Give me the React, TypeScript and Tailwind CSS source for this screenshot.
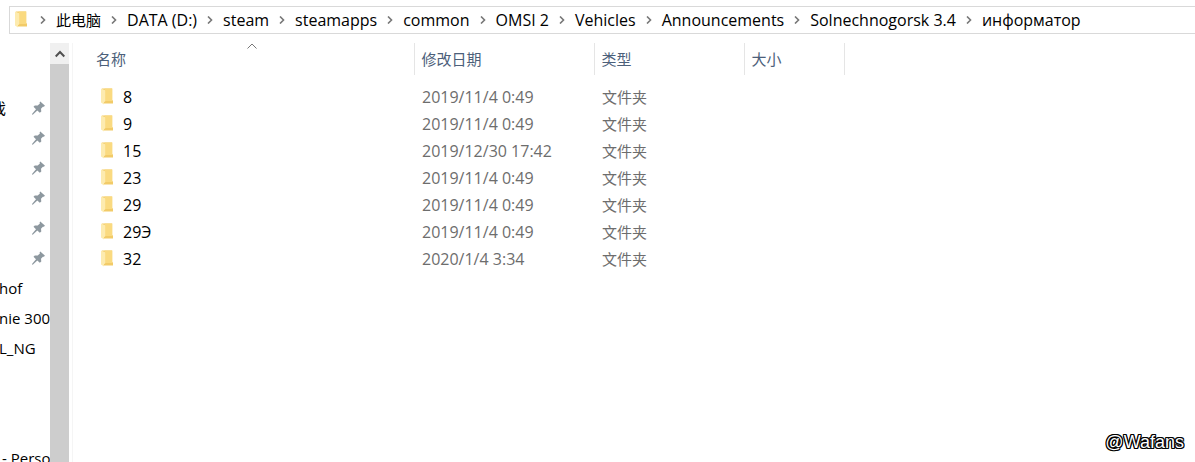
const crumbs = [
  'DATA (D:)',
  'steam',
  'steamapps',
  'common',
  'OMSI 2',
  'Vehicles',
  'Announcements',
  'Solnechnogorsk 3.4',
  'информатор',
]

const rows = [
  { name: '8', date: '2019/11/4 0:49' },
  { name: '9', date: '2019/11/4 0:49' },
  { name: '15', date: '2019/12/30 17:42' },
  { name: '23', date: '2019/11/4 0:49' },
  { name: '29', date: '2019/11/4 0:49' },
  { name: '29Э', date: '2019/11/4 0:49' },
  { name: '32', date: '2020/1/4 3:34' },
]

const pinned = ['戏', '', '', '', '', '']
const recent = ['hof', 'nie 300', 'L_NG']

function FolderIcon() {
  return (
    <svg className="h-[17px] w-3 shrink-0" viewBox="0 0 12 17" aria-hidden="true">
      <path d="M1 0.5h10.200v11.500l.8.8v2.700H2z" fill="#f2cb68" />
      <path d="M3.500 0.500h7.700v12.500H4z" fill="#fada80" />
      <path d="M0 0.500l3.600 1.500q.6.3.6.9v10.600l-1.200.6v2.400L0 14.500z" fill="#fdebaf" />
    </svg>
  )
}

function PinIcon() {
  return (
    <svg className="h-[14px] w-[13px] shrink-0" viewBox="0 0 13 14" aria-hidden="true">
      <path
        d="M8.300 0.500L13 4.800l-1.200 1-.9-.1-1.900 2.100.3 2.600-1.500 1.400L5.300 9.400 1 13.500l-1 .3.200-1.100L4 8.200 1.500 5.700l1.300-1.300 2.900.2 2.200-2.100-.3-1z"
        fill="#8d989f"
      />
    </svg>
  )
}

function Chevron() {
  return (
    <svg className="mx-[10px] h-2 w-[6px] shrink-0" viewBox="0 0 6 8" fill="none" aria-hidden="true">
      <path d="M1 0.500L4.500 4L1 7.500" stroke="#777" strokeWidth="1.600" />
    </svg>
  )
}

export default function App() {
  return (
    <div className="relative h-screen overflow-hidden bg-white pt-[6px] font-['Open_Sans','Noto_Sans_CJK_SC',sans-serif] text-base leading-5 text-black">
      {/* Address bar */}
      <nav
        aria-label="Path"
        className="ml-[9px] flex h-7 items-center border border-r-0 border-[#d9d9d9] pb-px pl-[5px]"
      >
        <FolderIcon />
        <ol className="flex items-center whitespace-nowrap">
          <li className="ml-[3px] flex items-center text-[15px]">
            <Chevron />
            <a href="#">此电脑</a>
          </li>
          {crumbs.map((crumb) => (
            <li key={crumb} className="flex items-center">
              <Chevron />
              <a href="#">{crumb}</a>
            </li>
          ))}
        </ol>
      </nav>

      <div className="mt-[9px] flex h-full">
        {/* Quick access */}
        <aside className="w-[50px] shrink-0 overflow-hidden pt-[50px]">
          <ul className="whitespace-nowrap">
            {pinned.map((label, i) => (
              <li key={i} className="flex h-[30px] items-center justify-between pr-[5px]">
                <span className="-ml-[9px] text-[15px]">{label}</span>
                <PinIcon />
              </li>
            ))}
            {recent.map((label) => (
              <li key={label} className="-ml-px flex h-[30px] items-center text-[15px]">
                {label}
              </li>
            ))}
            <li className="mt-20 flex h-[30px] items-center pl-[2px] text-[15px]">- Personal</li>
          </ul>
        </aside>

        {/* Scroll bar */}
        <div className="w-[19px] shrink-0 bg-[#cdcdcd]">
          <button
            type="button"
            aria-label="Scroll up"
            className="flex h-[21px] w-full items-center justify-center bg-[#f0f0f0]"
          >
            <svg className="h-2 w-[10px]" viewBox="0 0 10 8" fill="none" aria-hidden="true">
              <path d="M0.700 6.500L5 2l4.300 4.500" stroke="#505050" strokeWidth="2" />
            </svg>
          </button>
        </div>

        {/* File list */}
        <main className="relative ml-[3px] flex-1 border-l border-[#f5f5f5]">
          <svg
            className="absolute left-[174px] top-0 h-[6px] w-[10px]"
            viewBox="0 0 10 6"
            fill="none"
            aria-hidden="true"
          >
            <path d="M0.500 5.500L5 1l4.500 4.500" stroke="#777" />
          </svg>
          <table className="w-full table-fixed border-collapse text-left text-[#6d6d6d]">
            <colgroup>
              <col className="w-[341px]" />
              <col className="w-[180px]" />
              <col className="w-[150px]" />
              <col className="w-[100px]" />
              <col />
            </colgroup>
            <thead className="text-[15px] text-[#4c607a]">
              <tr className="h-8">
                <th className="border-r border-[#e5e5e5] pl-[23px] font-normal">名称</th>
                <th className="border-r border-[#e5e5e5] pl-[7px] font-normal">修改日期</th>
                <th className="border-r border-[#e5e5e5] pl-[7px] font-normal">类型</th>
                <th className="border-r border-[#e5e5e5] pl-[7px] font-normal">大小</th>
                <td />
              </tr>
            </thead>
            <tbody>
              <tr className="h-2" />
              {rows.map((row) => (
                <tr key={row.name} className="h-[27px]">
                  <td className="pl-7">
                    <span className="flex items-center gap-[10px] text-black">
                      <FolderIcon />
                      {row.name}
                    </span>
                  </td>
                  <td className="pl-2">{row.date}</td>
                  <td className="pl-2 text-[15px]">文件夹</td>
                </tr>
              ))}
            </tbody>
          </table>
        </main>
      </div>

      {/* Watermark */}
      <span className="absolute right-[11px] bottom-[10px] font-['Liberation_Sans',sans-serif] text-lg leading-5 text-white [text-shadow:1px_0_#000,-1px_0_#000,0_1px_#000,0_-1px_#000,1px_1px_#000,-1px_-1px_#000,1px_-1px_#000,-1px_1px_#000]">
        @Wafans
      </span>
    </div>
  )
}
